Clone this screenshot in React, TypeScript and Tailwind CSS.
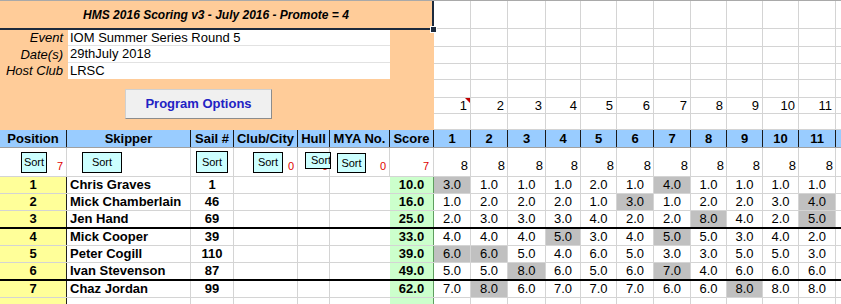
import React from "react";

const FONT = "font-['Liberation_Sans',Arial,sans-serif]";
const LINE = "border-[#d4d4d4]";

// fixed columns: Position, Skipper, Sail #, Club/City, Hull, MYA No., Score
const FIX = ["w-[67px]", "w-[124px]", "w-[43px]", "w-[64px]", "w-[32px]", "w-[60px]", "w-[44px]"];
const RACE = ["w-[37px]", "w-[37px]", "w-[38px]", "w-[35px]", "w-[36px]", "w-[37px]", "w-[37px]", "w-[36px]", "w-[36px]", "w-[36px]", "w-[37px]"];
const TOP_H = ["h-[28px]", "h-[18px]", "h-[17px]", "h-[16px]", "h-[18px]", "h-[16px]", "h-[16px]"];
const HEADS = ["Position", "Skipper", "Sail #", "Club/City", "Hull", "MYA No.", "Score"];

const INFO = [
  ["Event", "IOM Summer Series Round 5", "h-[16px]"],
  ["Date(s)", "29thJuly 2018", "h-[17px]"],
  ["Host Club", "LRSC", "h-[16px]"],
];

const ROWS = [
  { pos: 1, name: "Chris Graves", sail: "1", score: "10.0", r: [3, 1, 1, 1, 2, 1, 4, 1, 1, 1, 1], d: [0, 6], thick: false },
  { pos: 2, name: "Mick Chamberlain", sail: "46", score: "16.0", r: [1, 2, 2, 2, 1, 3, 1, 2, 2, 3, 4], d: [5, 10], thick: false },
  { pos: 3, name: "Jen Hand", sail: "69", score: "25.0", r: [2, 3, 3, 3, 4, 2, 2, 8, 4, 2, 5], d: [7, 10], thick: true },
  { pos: 4, name: "Mick Cooper", sail: "39", score: "33.0", r: [4, 4, 4, 5, 3, 4, 5, 5, 3, 4, 2], d: [3, 6], thick: false },
  { pos: 5, name: "Peter Cogill", sail: "110", score: "39.0", r: [6, 6, 5, 4, 6, 5, 3, 3, 5, 5, 3], d: [0, 1], thick: false },
  { pos: 6, name: "Ivan Stevenson", sail: "87", score: "49.0", r: [5, 5, 8, 6, 5, 6, 7, 4, 6, 6, 6], d: [2, 6], thick: true },
  { pos: 7, name: "Chaz Jordan", sail: "99", score: "62.0", r: [7, 8, 6, 7, 7, 7, 6, 6, 8, 8, 8], d: [1, 8], thick: false },
];

// floating sort buttons on the sheet (left offset, top/height)
const SORTS = [
  { k: "pos", cls: "left-[21px] top-[4px] w-[26px] h-[21px] justify-center" },
  { k: "skip", cls: "left-[82px] top-[4px] w-[40px] h-[21px] justify-center" },
  { k: "sail", cls: "left-[196px] top-[3px] w-[32px] h-[22px] justify-center" },
  { k: "club", cls: "left-[253px] top-[4px] w-[30px] h-[21px] justify-center" },
  { k: "hull", cls: "left-[305px] top-[4px] w-[26px] h-[17px] justify-start pl-[5px]" },
  { k: "mya", cls: "left-[337px] top-[5px] w-[29px] h-[20px] justify-center" },
];

const SORT_MARKS = [
  { v: "7", cls: "pr-[3px]" }, null, null, { v: "0", cls: "pr-[3px]" }, { v: "0", cls: "pr-[1px]" }, { v: "0", cls: "pr-[3px]" }, { v: "7", cls: "pr-[4px]" },
];

export default function App() {
  return (
    <div className={`${FONT} w-[841px] h-[304px] overflow-hidden bg-white text-[13px] text-black`}>
      {/* Top: title, event info, program button */}
      <div className="flex border-t border-[#a9a9a9]">
        <div className="relative w-[434px] h-[129px] shrink-0 bg-[#ffcc99]">
          <div className="h-[29px] flex items-center justify-center border-b-2 border-r-2 border-[#1c2a3d] text-[12px] font-bold italic">
            HMS 2016 Scoring v3 - July 2016 - Promote = 4
          </div>
          <span className="absolute left-[430px] top-[25px] w-[7px] h-[7px] bg-[#1c2a3d] border border-white" />
          {INFO.map(([label, value, h], i) => (
            <div key={label} className={`flex ${h}`}>
              <div className="w-[68px] pr-[5px] flex items-center justify-end italic">{label}</div>
              <div className={`w-[322px] bg-white pl-[2px] flex items-center ${i < 2 ? "border-b border-[#e2e2e2]" : ""}`}>{value}</div>
            </div>
          ))}
          <div className="pl-[125px] pt-[10px]">
            <div className="w-[147px] h-[30px] flex items-center justify-center bg-[#f0f0f0] border border-[#d0d0d0] border-r-[#8c8c8c] border-b-[#8c8c8c] text-[#2222c4] font-bold">
              Program Options
            </div>
          </div>
        </div>
        <div className="flex-1">
          {TOP_H.map((h, ri) => (
            <div key={ri} className={`flex ${h} border-b ${LINE}`}>
              {RACE.map((w, ci) => (
                <div key={ci} className={`relative ${w} border-r ${LINE} flex items-center justify-end pr-[3px]`}>
                  {ri === 5 && ci + 1}
                  {ri === 5 && ci === 0 && (
                    <span className="absolute right-0 top-0 w-0 h-0 border-l-[5px] border-l-transparent border-t-[5px] border-t-[#c00000]" />
                  )}
                </div>
              ))}
              <div className="flex-1" />
            </div>
          ))}
        </div>
      </div>

      {/* Column headers */}
      <div className="flex h-[18px] bg-[#99ccff] border-b border-[#a0a0a0] font-bold">
        {HEADS.map((t, i) => (
          <div key={t} className={`${FIX[i]} border-r border-[#1a1a1a] flex items-center justify-center`}>{t}</div>
        ))}
        {RACE.map((w, i) => (
          <div key={i} className={`${w} border-r border-[#1a1a1a] flex items-center justify-center`}>{i + 1}</div>
        ))}
        <div className="flex-1" />
      </div>

      {/* Sort row */}
      <div className={`relative flex h-[29px] border-b ${LINE}`}>
        {FIX.map((w, i) => (
          <div key={i} className={`${w} border-r ${LINE} flex items-end justify-end pb-[2px] text-[11px] text-[#e00000] ${SORT_MARKS[i]?.cls ?? ""}`}>
            {SORT_MARKS[i]?.v}
          </div>
        ))}
        {RACE.map((w, i) => (
          <div key={i} className={`${w} border-r ${LINE} flex items-end justify-end pr-[2px] pb-[1px]`}>8</div>
        ))}
        <div className="flex-1" />
        {SORTS.map((s) => (
          <div key={s.k} className={`absolute ${s.cls} flex items-center overflow-hidden whitespace-nowrap bg-[#ccffff] border border-black text-[11px]`}>
            Sort
          </div>
        ))}
      </div>

      {/* Results */}
      {ROWS.map((row) => (
        <div key={row.pos} className={`flex ${row.thick ? "h-[18px] border-b-2 border-black" : `h-[17px] border-b ${LINE}`}`}>
          <div className="w-[67px] bg-[#ffff99] border-r border-[#202020] flex items-center justify-center font-bold">{row.pos}</div>
          <div className={`w-[124px] border-r ${LINE} flex items-center pl-[3px] font-bold whitespace-nowrap`}>{row.name}</div>
          <div className={`w-[43px] border-r ${LINE} flex items-center justify-center font-bold`}>{row.sail}</div>
          <div className={`w-[64px] border-r ${LINE}`} />
          <div className={`w-[32px] border-r ${LINE}`} />
          <div className="w-[60px]" />
          <div className="w-[44px] bg-[#ccffcc] border-r border-[#5f9e5f] flex items-center justify-center font-bold">{row.score}</div>
          {RACE.map((w, i) => (
            <div key={i} className={`${w} border-r ${LINE} flex items-center justify-center ${row.d.includes(i) ? "bg-[#c0c0c0]" : ""}`}>
              {row.r[i].toFixed(1)}
            </div>
          ))}
          <div className="flex-1" />
        </div>
      ))}
      <div className="flex h-[10px]">
        <div className="w-[67px] bg-[#ffff99] border-r border-[#202020]" />
        <div className={`w-[124px] border-r ${LINE}`} />
        <div className={`w-[43px] border-r ${LINE}`} />
        <div className={`w-[64px] border-r ${LINE}`} />
        <div className={`w-[32px] border-r ${LINE}`} />
        <div className="w-[60px]" />
        <div className="w-[44px] bg-[#ccffcc] border-r border-[#5f9e5f]" />
        {RACE.map((w, i) => (
          <div key={i} className={`${w} border-r ${LINE}`} />
        ))}
      </div>
    </div>
  );
}
